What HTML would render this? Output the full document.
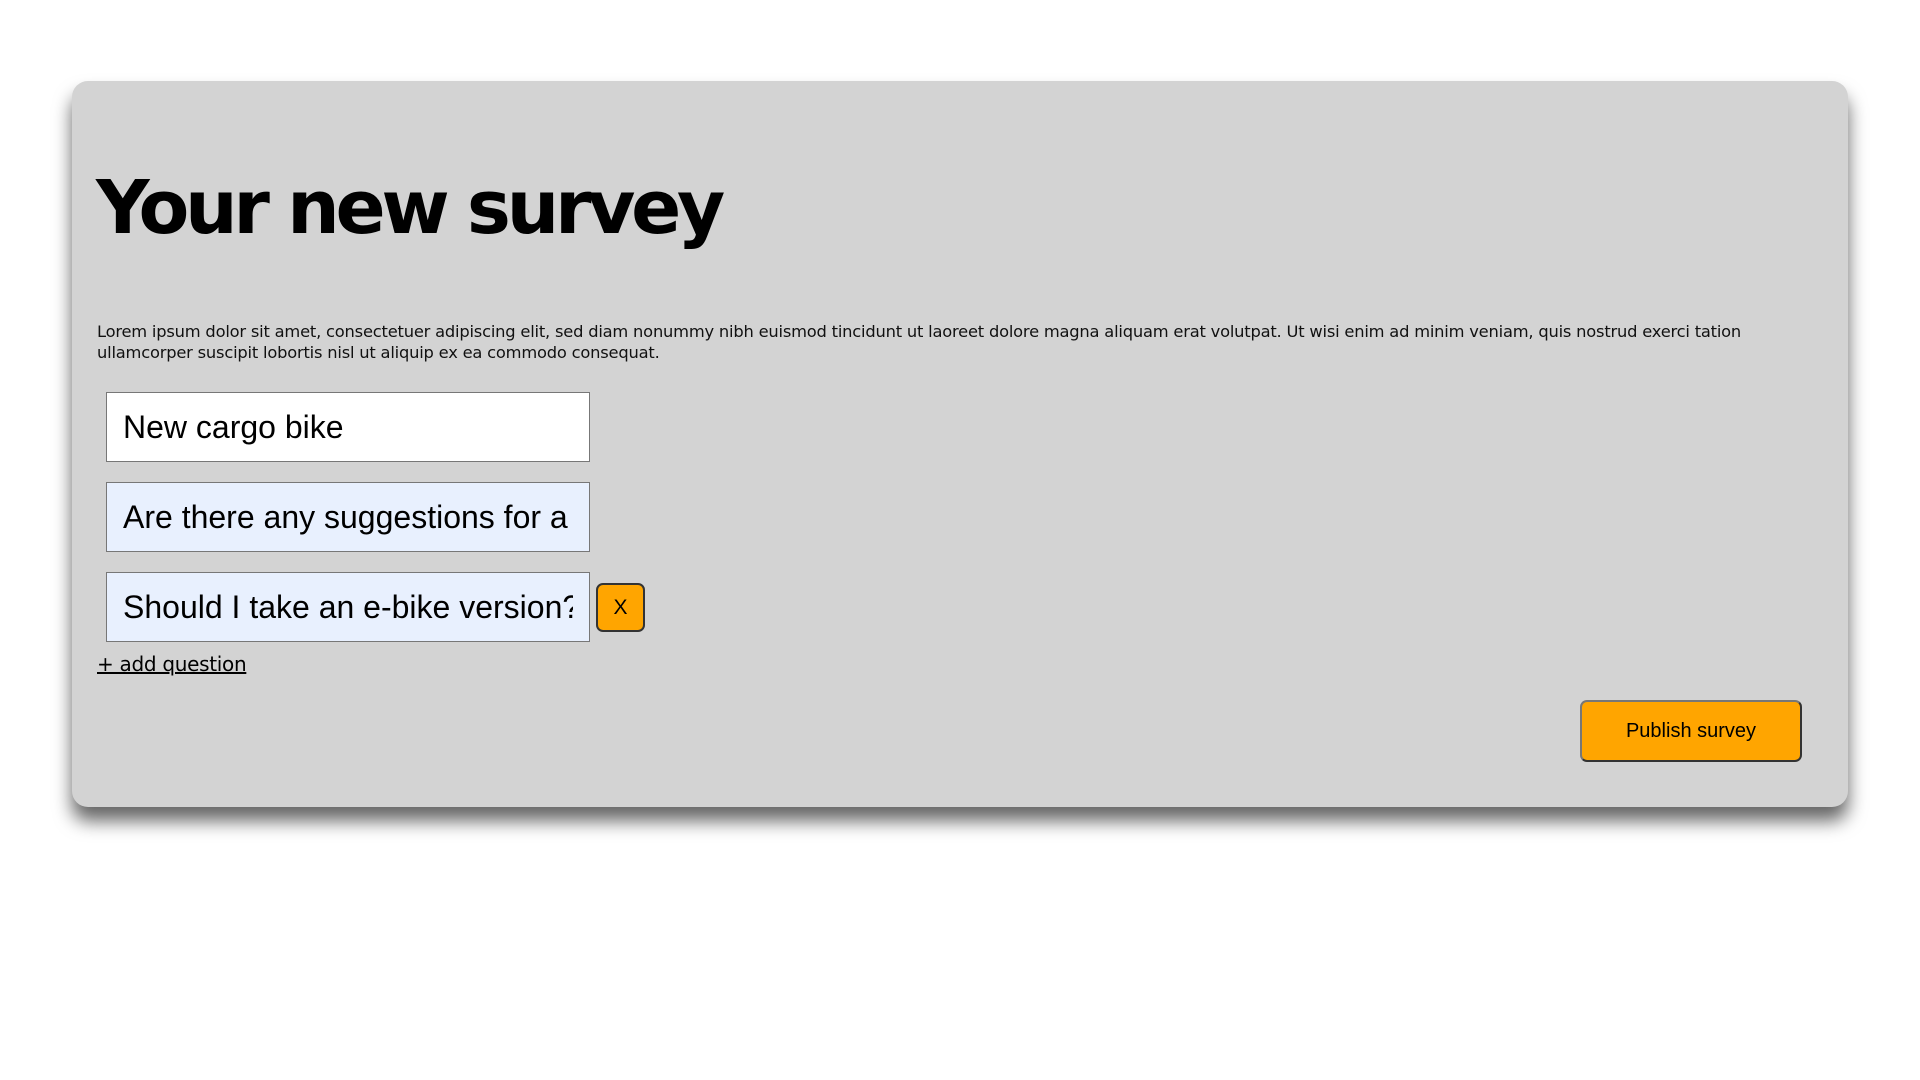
<!DOCTYPE html>
<html><head><meta charset="utf-8"><style>
html,body{margin:0;padding:0;background:#fff;width:1920px;height:1080px;overflow:hidden}
.card{position:absolute;left:72px;top:81px;width:1776px;height:726px;background:#d3d3d3;border-radius:16px;box-shadow:0 14px 18px rgba(0,0,0,.6);font-family:"DejaVu Sans","Liberation Sans",sans-serif}
h1{position:absolute;left:24px;top:87px;margin:0;font-family:"DejaVu Sans",sans-serif;font-weight:bold;font-size:74px;line-height:80px;letter-spacing:-4.3px;color:#000;white-space:nowrap}
p{position:absolute;left:25px;top:240px;width:1720px;margin:0;font-size:16.3px;line-height:21px;color:#111;font-family:"DejaVu Sans",sans-serif;letter-spacing:-0.2px}
.in{position:absolute;left:34px;width:484px;height:70px;box-sizing:border-box;border:1px solid #777;background:#e8f0fe;font-family:"Liberation Sans",Arial,sans-serif;font-size:32px;line-height:68px;padding-left:16px;white-space:nowrap;overflow:hidden;color:#000}
.in span{display:block;width:450px;overflow:hidden}
.x{position:absolute;left:524px;top:502px;width:49px;height:49px;box-sizing:border-box;background:#ffa500;border:2px solid #333;border-radius:7px;font-family:"Liberation Sans",sans-serif;font-size:21px;line-height:45px;text-align:center}
.add{position:absolute;left:25px;top:571px;font-size:20px;text-decoration:underline;color:#000;font-family:"DejaVu Sans",sans-serif;letter-spacing:-0.3px}
.pub{position:absolute;left:1508px;top:619px;width:222px;height:62px;box-sizing:border-box;background:#ffa500;border:2px solid #333;border-top-color:#777;border-left-color:#777;border-radius:7px;font-family:"Liberation Sans",sans-serif;font-size:20px;line-height:58px;text-align:center}
</style></head><body>
<div class="card">
<h1>Your new survey</h1>
<p>Lorem ipsum dolor sit amet, consectetuer adipiscing elit, sed diam nonummy nibh euismod tincidunt ut laoreet dolore magna aliquam erat volutpat. Ut wisi enim ad minim veniam, quis nostrud exerci tation ullamcorper suscipit lobortis nisl ut aliquip ex ea commodo consequat.</p>
<div class="in" style="top:311px;background:#fff"><span>New cargo bike</span></div>
<div class="in" style="top:401px"><span>Are there any suggestions for a</span></div>
<div class="in" style="top:491px"><span>Should I take an e-bike version?</span></div>
<div class="x">X</div>
<div class="add">+ add question</div>
<div class="pub">Publish survey</div>
</div>
</body></html>
